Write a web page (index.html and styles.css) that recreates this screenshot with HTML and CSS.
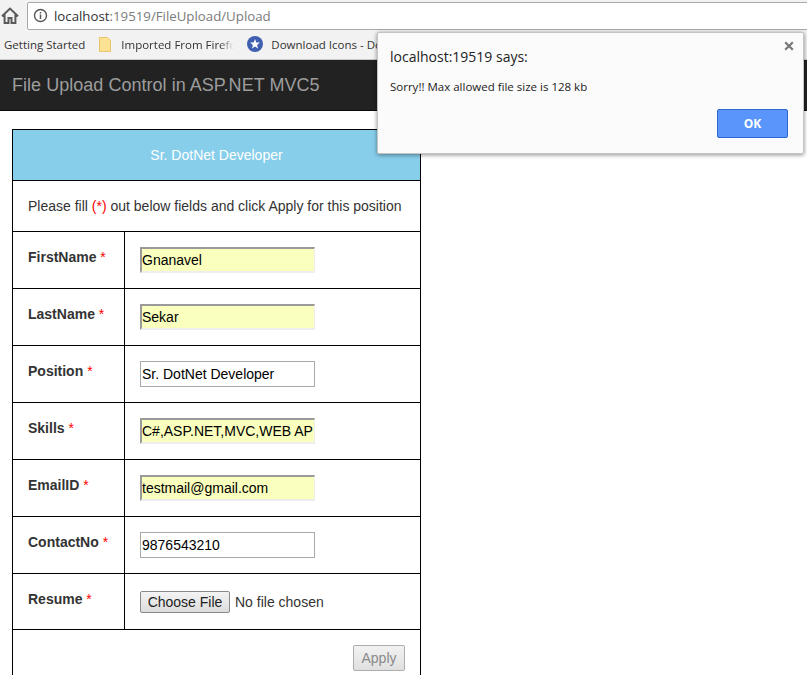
FILE: index.html
```html
<!DOCTYPE html>
<html lang="en">
<head>
<meta charset="utf-8">
<title>File Upload Control in ASP.NET MVC5</title>
<link rel="stylesheet" href="styles.css">
</head>
<body>
<div class="toolbar">
  <svg class="home" width="18" height="18" viewBox="0 0 18 18"><path d="M1 9.2 9 1.6l8 7.6M3.6 7.4V16h3.9v-5h3v5h3.9V7.4" fill="none" stroke="#5a5a5a" stroke-width="2"/></svg>
  <div class="omnibox">
    <svg class="info" width="15" height="15" viewBox="0 0 15 15"><circle cx="7.5" cy="7.5" r="6" fill="none" stroke="#555" stroke-width="1.4"/><path d="M7.5 6.6v4.4M7.5 4v1.6" stroke="#555" stroke-width="1.5"/></svg>
    <span class="host">localhost</span><span class="path">:19519/FileUpload/Upload</span>
  </div>
</div>
<div class="bookmarks">
  <span class="bm bm-first">Getting Started</span>
  <svg class="bm-icon" width="12" height="15" viewBox="0 0 12 15"><path d="M.5.5h8l3 3v11H.5z" fill="#fde293" stroke="#e9c46a"/></svg>
  <span class="bm bm-fade">Imported From Firefo</span>
  <svg class="bm-icon star" width="16" height="16" viewBox="0 0 16 16"><circle cx="8" cy="8" r="8" fill="#3f5fb0"/><path d="m8 3 1.3 3.4 3.6.2-2.8 2.3.9 3.5L8 10.4 5 12.4l.9-3.5-2.8-2.3 3.6-.2z" fill="#fff"/></svg>
  <span class="bm">Download Icons - Do</span>
</div>
<header class="navbar">File Upload Control in ASP.NET MVC5</header>
<main class="content">
  <table class="form">
    <colgroup><col class="col-label"><col></colgroup>
    <tr><th colspan="2" class="title">Sr. DotNet Developer</th></tr>
    <tr><td colspan="2" class="intro">Please fill <span class="req-plain">(*)</span> out below fields and click Apply for this position</td></tr>
    <tr><td class="label">FirstName <span class="req">*</span></td><td class="field"><input class="input filled" value="Gnanavel"></td></tr>
    <tr><td class="label">LastName <span class="req">*</span></td><td class="field"><input class="input filled" value="Sekar"></td></tr>
    <tr><td class="label">Position <span class="req">*</span></td><td class="field"><input class="input" value="Sr. DotNet Developer"></td></tr>
    <tr><td class="label">Skills <span class="req">*</span></td><td class="field"><input class="input filled" value="C#,ASP.NET,MVC,WEB API"></td></tr>
    <tr><td class="label">EmailID <span class="req">*</span></td><td class="field"><input class="input filled" value="testmail@gmail.com"></td></tr>
    <tr><td class="label">ContactNo <span class="req">*</span></td><td class="field"><input class="input" value="9876543210"></td></tr>
    <tr><td class="label short">Resume <span class="req">*</span></td><td class="field"><span class="file"><button class="choose" type="button">Choose File</button><span class="nofile">No file chosen</span></span></td></tr>
    <tr><td colspan="2" class="actions"><button class="apply" type="button">Apply</button></td></tr>
  </table>
</main>
<div class="dialog">
  <button class="close" type="button" aria-label="Close"><svg width="10" height="10" viewBox="0 0 10 10"><path d="M1.2 1.2l7.6 7.6M8.8 1.2 1.2 8.8" stroke="#777" stroke-width="2.2"/></svg></button>
  <div class="dialog-title">localhost:19519 says:</div>
  <div class="dialog-msg">Sorry!! Max allowed file size is 128 kb</div>
  <div class="dialog-actions"><button class="ok" type="button">OK</button></div>
</div>
</body>
</html>
```
FILE: styles.css
```css
* { box-sizing: border-box; }
html, body { margin: 0; height: 675px; overflow: hidden; background: #fff; }
body { position: relative; font-family: "Liberation Sans", Arial, sans-serif; color: #333; }
.toolbar { height: 31px; display: flex; align-items: center; background: #f2f2f2; padding-left: 1px; }
.home { flex: none; margin-right: 8px; }
.omnibox { flex: 1; height: 28px; margin-right: -4px; background: #fff; border: 1px solid #a9a9a9; border-radius: 2px; display: flex; align-items: center; padding-left: 5px; font-family: "Open Sans", "Noto Sans", sans-serif; font-size: 13.25px; }
.info { margin-right: 6px; }
.host { color: #333; }
.path { color: #7b7b7b; }
.bookmarks { height: 29px; background: #f2f2f2; border-bottom: 1px solid #c8c8c8; display: flex; align-items: center; font-family: "Open Sans", "Noto Sans", sans-serif; font-size: 11.5px; color: #333; white-space: nowrap; overflow: hidden; padding: 0 0 2px 4px; }
.bm-first { margin-right: 14px; }
.bm-icon { flex: none; margin-right: 10px; }
.bm-icon.star { margin-right: 8px; }
.bm-fade { flex: none; margin-right: 11px; -webkit-mask-image: linear-gradient(90deg, #000 86%, transparent 98%); mask-image: linear-gradient(90deg, #000 86%, transparent 98%); }
.navbar { height: 51px; background: #222; border-bottom: 1px solid #080808; color: #9d9d9d; font-size: 18px; letter-spacing: .03px; padding: 15px 0 0 12px; line-height: 20px; }
.content { padding: 18px 0 0 12px; }
.form { border-collapse: collapse; width: 409px; table-layout: fixed; font-size: 14px; }
.col-label { width: 112px; }
.form th, .form td { border: 1px solid #000; padding: 0; }
.title { height: 51px; background: #87ceeb; color: #fff; font-weight: 400; font-size: 14px; text-align: center; }
.intro { height: 51px; padding-left: 15px !important; }
.req-plain { color: #f00; }
.label { height: 57px; font-weight: 700; padding: 0 0 6px 15px !important; }
.label.short { height: 56px; }
.req { color: #f00; font-weight: 400; }
.field { padding-left: 15px !important; }
.input { display: block; width: 175px; height: 26px; padding: 1px 1px; font: 14px "Liberation Sans", Arial, sans-serif; color: #000; background: #fff; border: 1px solid #a9a9a9; outline: 0; }
.filled { background: #faffbd; border-width: 2px 1px 2px 2px; border-style: solid; border-color: #9a9a9a #eee #eee #9a9a9a; padding: 0 1px 0 0; }
.file { display: flex; align-items: center; font-size: 14px; }
.choose { width: 90px; height: 22px; padding: 0; margin-right: 5px; font: 14px "Liberation Sans", Arial, sans-serif; color: #222; background: linear-gradient(#f4f4f4, #dcdcdc); border: 1px solid #8a8a8a; border-radius: 2px; }
.nofile { color: #333; }
.actions { height: 56px; text-align: right; padding: 0 15px 0 0 !important; }
.apply { width: 52px; height: 26px; padding: 0; font: 14px "Liberation Sans", Arial, sans-serif; color: #8a8a8a; background: linear-gradient(#f2f2f2, #e0e0e0); border: 1px solid #adadad; border-radius: 2px; }
.dialog { position: absolute; left: 377px; top: 32px; width: 427px; height: 122px; background: #fbfbfb; border: 1px solid #c4c4c4; border-radius: 2px; box-shadow: 0 1px 4px rgba(0,0,0,.45); padding: 14px 15px 0 12px; color: #222; font-family: "Open Sans", "Noto Sans", sans-serif; }
.close { position: absolute; right: 8px; top: 7px; width: 12px; height: 12px; padding: 1px; border: 0; background: none; display: flex; }
.dialog-title { font-size: 14px; line-height: 20px; }
.dialog-msg { font-size: 11.5px; line-height: 16px; margin-top: 12px; }
.dialog-actions { display: flex; justify-content: flex-end; margin-top: 14px; }
.ok { width: 71px; height: 29px; background: #5a95fb; border: 1px solid #2f66d0; border-radius: 2px; color: #fff; font: 700 12px "Open Sans", "Noto Sans", sans-serif; padding: 0; }
```
